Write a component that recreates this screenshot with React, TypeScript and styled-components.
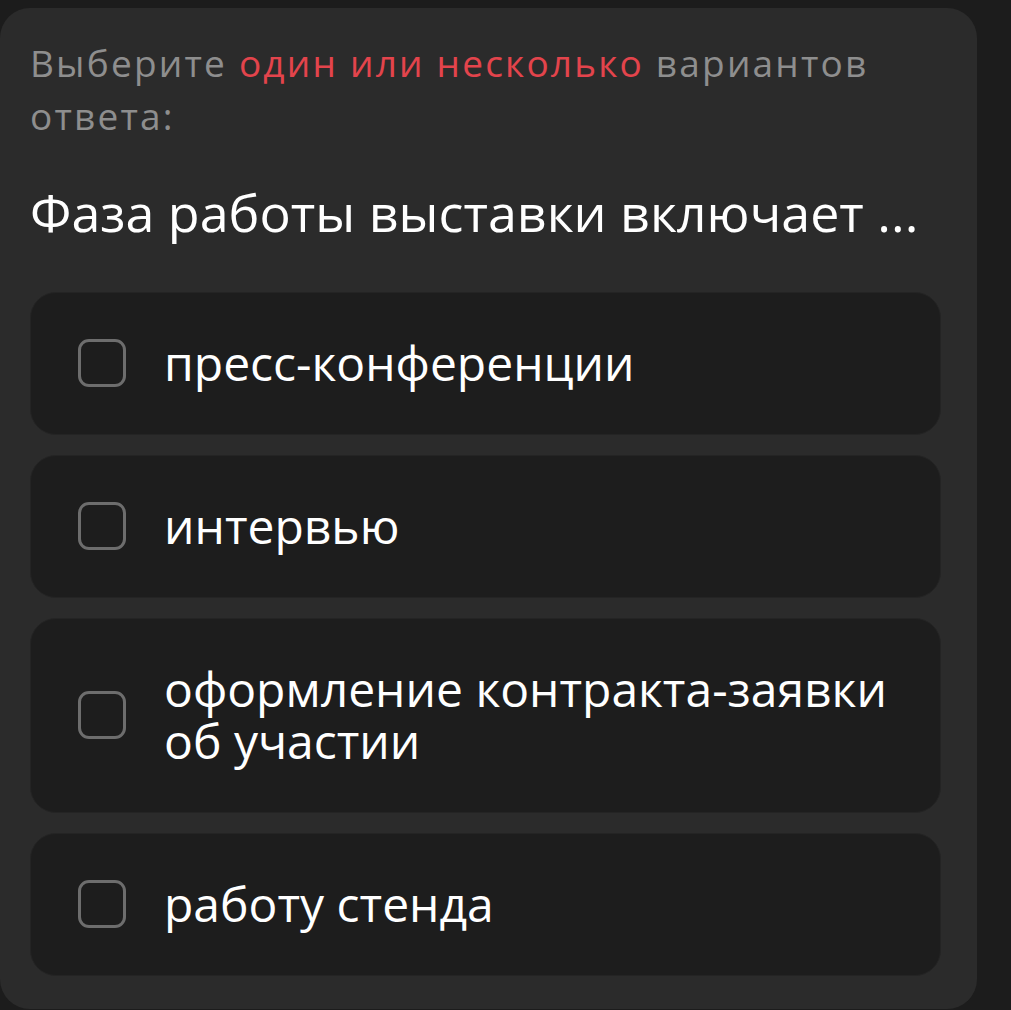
import React from "react";
import styled, { createGlobalStyle } from "styled-components";

const Global = createGlobalStyle`
  html, body {
    margin: 0;
    padding: 0;
    background: #1c1c1c;
  }
  body {
    font-family: "Open Sans", "Noto Sans", sans-serif;
    -webkit-font-smoothing: antialiased;
  }
`;

const Page = styled.div`
  padding-top: 8px;
  width: 1011px;
  height: 1010px;
  box-sizing: border-box;
  overflow: hidden;
`;

const Card = styled.section`
  width: 977px;
  box-sizing: border-box;
  background: #2b2b2b;
  border-radius: 30px;
  padding: 28px 36px 33px 30px;
`;

const Instruction = styled.p`
  margin: 0;
  font-size: 37px;
  line-height: 53px;
  letter-spacing: 2.2px;
  color: #8e8e8e;
  font-weight: 400;
`;

const Accent = styled.span`
  color: #e3444c;
`;

const Question = styled.h2`
  margin: 40px 0 50px;
  font-size: 52px;
  line-height: 60px;
  font-weight: 500;
  color: #ffffff;
`;

const Options = styled.div`
  display: flex;
  flex-direction: column;
  gap: 20px;
`;

const Option = styled.label`
  display: flex;
  align-items: center;
  gap: 38px;
  background: #1d1d1d;
  border: 1px solid #242424;
  border-radius: 26px;
  padding: 44px 40px 45px 47px;
  cursor: pointer;
`;

const Box = styled.span`
  flex: 0 0 auto;
  width: 48px;
  height: 48px;
  box-sizing: border-box;
  border: 3px solid #6d6d6d;
  border-radius: 11px;
`;

const OptionText = styled.span`
  font-size: 48px;
  line-height: 52px;
  color: #ffffff;
  font-weight: 400;
`;

const options = [
  "пресс-конференции",
  "интервью",
  "оформление контракта-заявки об участии",
  "работу стенда",
];

export default function App() {
  return (
    <Page>
      <Global />
      <Card>
        <Instruction>
          Выберите <Accent>один или несколько</Accent> вариантов ответа:
        </Instruction>
        <Question>Фаза работы выставки включает ...</Question>
        <Options>
          {options.map((o) => (
            <Option key={o}>
              <Box />
              <OptionText>{o}</OptionText>
            </Option>
          ))}
        </Options>
      </Card>
    </Page>
  );
}
